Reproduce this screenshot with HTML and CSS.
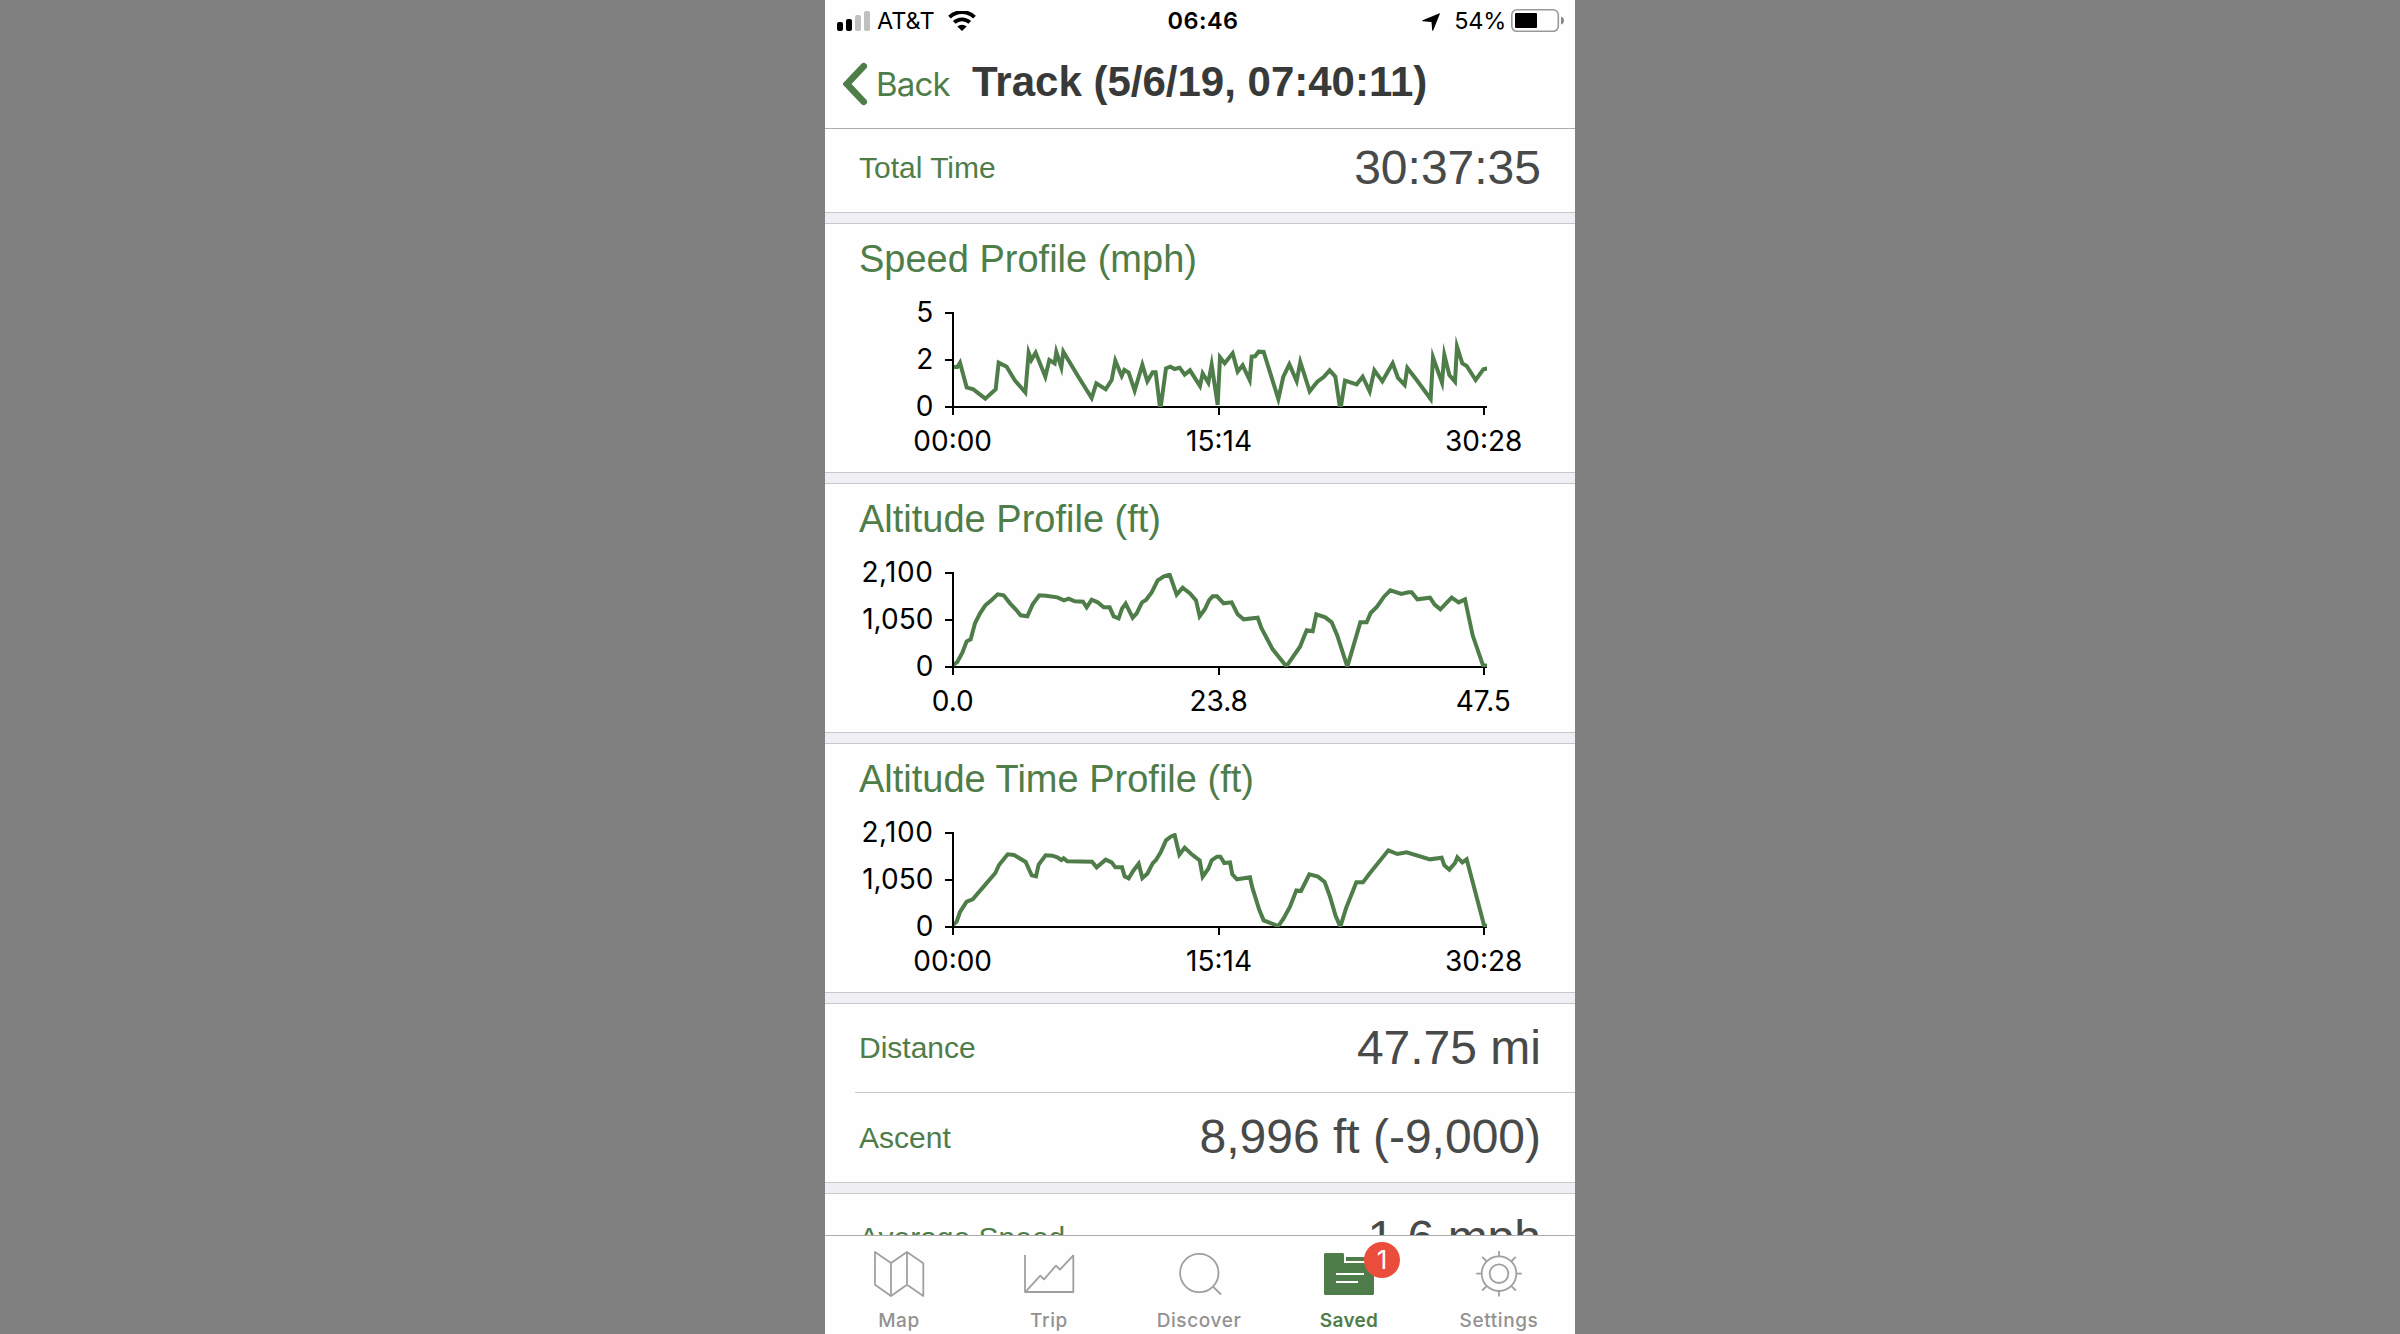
FILE: index.html
```html
<!DOCTYPE html>
<html lang="en">
<head>
    <meta charset="UTF-8">
    <meta name="viewport" content="width=device-width, initial-scale=1.0">
    <title>Track</title>
    <link rel="stylesheet" href="styles.css">
</head>
<body>
    <div class="phone">
        <header class="header">
            <div class="status-bar">
                <div class="status-left">
                    <svg class="signal" width="34" height="20" viewBox="0 0 34 20">
                        <rect x="0" y="11" width="6" height="9" rx="2"/>
                        <rect x="9" y="8" width="6" height="12" rx="2"/>
                        <rect class="dim" x="18" y="4" width="6" height="16" rx="2"/>
                        <rect class="dim" x="27" y="0" width="6" height="20" rx="2"/>
                    </svg>
                    <span class="carrier">AT&amp;T</span>
                    <svg class="wifi" width="28" height="20" viewBox="0 0 28 20">
                        <path d="M1.5 6.2a18 18 0 0 1 25 0M6.2 11.4a11.5 11.5 0 0 1 15.6 0" fill="none" stroke="#000" stroke-width="3.9"/>
                        <path d="M14 20l-4.7-4.4a7 7 0 0 1 9.4 0z"/>
                    </svg>
                </div>
                <span class="clock">06:46</span>
                <div class="status-right">
                    <svg class="location" width="18" height="18" viewBox="0 0 18 18">
                        <path d="M17.6 0.3Q18 0 17.9 0.7L11.2 17.4Q10.5 18.3 10.2 17.2L9.5 9L0.8 8.3Q-0.3 7.8 0.6 7.2z"/>
                    </svg>
                    <span class="percent">54%</span>
                    <svg class="battery" width="54" height="24" viewBox="0 0 54 24">
                        <rect x="0.8" y="0.8" width="46.5" height="21.5" rx="5" fill="none" stroke="#999" stroke-width="1.6"/>
                        <rect x="4" y="4" width="22" height="15" rx="1"/>
                        <path d="M50 7.5q3 1 3 4t-3 4z" fill="#888"/>
                    </svg>
                </div>
            </div>
            <div class="nav-bar">
                <svg class="chevron" width="26" height="44" viewBox="0 0 26 44">
                    <path d="M20.7 4.3L4 22L20.7 39.7"/>
                </svg>
                <span class="back">Back</span>
                <h1>Track (5/6/19, 07:40:11)</h1>
            </div>
        </header>

        <main class="content">
            <section class="card first">
                <div class="row"><span class="label">Total Time</span><span class="value">30:37:35</span></div>
            </section>

            <section class="card">
                <h2>Speed Profile (mph)</h2>
                <svg class="chart" viewBox="-45 210 2250 540">
                    <clipPath id="plot"><rect x="342" y="279" width="1599" height="282"/></clipPath>
                    <path class="axis" d="M315 279H339V585M315 420H339M315 561H1941M1137 561V585M1932 561V585"/>
                    <polyline class="line" clip-path="url(#plot)" points="340,441 352,441 360,428 380,502 400,508 436,536 467,508 476,428 500,440 525,482 556,517 566,398 574,420 587,398 616,470 628,420 644,430 649,396 664,442 670,395 715,470 755,534 769,490 797,508 815,480 826,422 845,468 853,450 866,458 884,512 907,434 922,484 938,457 947,457 961,570 978,445 991,440 1004,447 1019,443 1034,464 1050,451 1080,498 1088,460 1105,488 1115,434 1133,555 1140,412 1154,430 1178,400 1193,455 1208,436 1229,480 1235,410 1245,409 1256,395 1271,396 1315,537 1330,470 1348,433 1370,483 1381,426 1409,514 1432,485 1451,471 1469,451 1486,470 1501,570 1515,482 1550,493 1568,470 1589,514 1603,451 1627,484 1658,430 1674,474 1694,495 1702,444 1730,480 1772,537 1779,412 1806,488 1813,405 1828,465 1845,485 1851,380 1867,430 1880,438 1907,480 1930,448 1945,445"/>
                    <g class="y-labels">
                        <text x="280" y="306">5</text>
                        <text x="280" y="447">2</text>
                        <text x="280" y="588">0</text>
                    </g>
                    <g class="x-labels">
                        <text x="338" y="692">00:00</text>
                        <text x="1137" y="692">15:14</text>
                        <text x="1931" y="692">30:28</text>
                    </g>
                </svg>
            </section>

            <section class="card">
                <h2>Altitude Profile (ft)</h2>
                <svg class="chart" viewBox="-45 210 2250 540">
                    <path class="axis" d="M315 279H339V585M315 420H339M315 561H1941M1137 561V585M1932 561V585"/>
                    <polyline class="line" clip-path="url(#plot)" points="338,556 352,546 367,518 380,484 392,478 405,430 420,400 436,376 455,360 473,343 491,346 510,370 527,388 542,406 562,409 578,373 598,346 618,347 652,352 672,361 686,356 704,364 729,365 740,382 755,359 773,367 791,382 809,382 821,409 836,415 846,386 857,371 878,413 890,400 906,367 918,360 935,337 953,301 972,289 989,284 1010,344 1028,323 1050,340 1068,361 1079,409 1095,387 1107,361 1118,349 1131,349 1151,370 1175,367 1193,403 1211,418 1253,413 1264,444 1298,508 1339,559 1380,500 1400,451 1418,454 1429,403 1456,412 1475,427 1492,467 1522,560 1561,427 1580,427 1592,399 1611,380 1632,350 1651,331 1684,342 1705,337 1715,337 1732,358 1770,353 1784,374 1801,388 1835,353 1856,367 1875,358 1898,466 1929,556 1945,558"/>
                    <g class="y-labels">
                        <text class="wide" x="280" y="306">2,100</text>
                        <text x="280" y="447">1,050</text>
                        <text x="280" y="588">0</text>
                    </g>
                    <g class="x-labels">
                        <text x="338" y="692">0.0</text>
                        <text x="1136" y="692">23.8</text>
                        <text x="1930" y="692">47.5</text>
                    </g>
                </svg>
            </section>

            <section class="card">
                <h2>Altitude Time Profile (ft)</h2>
                <svg class="chart" viewBox="-45 210 2250 540">
                    <path class="axis" d="M315 279H339V585M315 420H339M315 561H1941M1137 561V585M1932 561V585"/>
                    <polyline class="line" clip-path="url(#plot)" points="338,556 350,545 360,516 380,485 398,478 436,434 466,399 477,375 503,343 522,345 557,366 575,406 588,409 596,374 617,346 637,347 652,352 664,360 671,355 682,364 756,365 770,382 797,359 815,367 826,382 846,382 854,409 866,415 880,392 896,371 907,414 922,401 938,370 948,360 962,337 978,301 992,290 1004,285 1018,344 1034,323 1054,342 1079,361 1088,410 1105,386 1115,361 1131,350 1141,350 1153,369 1170,367 1177,403 1191,418 1230,412 1237,443 1258,510 1271,541 1315,558 1330,537 1350,500 1369,451 1383,453 1408,403 1434,410 1454,426 1470,470 1487,528 1501,560 1518,505 1549,427 1569,427 1587,403 1645,331 1672,342 1700,337 1770,358 1805,353 1813,376 1828,389 1845,369 1852,352 1867,367 1880,358 1932,555 1945,558"/>
                    <g class="y-labels">
                        <text class="wide" x="280" y="306">2,100</text>
                        <text x="280" y="447">1,050</text>
                        <text x="280" y="588">0</text>
                    </g>
                    <g class="x-labels">
                        <text x="338" y="692">00:00</text>
                        <text x="1137" y="692">15:14</text>
                        <text x="1931" y="692">30:28</text>
                    </g>
                </svg>
            </section>

            <section class="card">
                <div class="row"><span class="label">Distance</span><span class="value">47.75 mi</span></div>
                <div class="row"><span class="label">Ascent</span><span class="value">8,996 ft (-9,000)</span></div>
            </section>

            <section class="card">
                <div class="row"><span class="label">Average Speed</span><span class="value">1.6 mph</span></div>
            </section>
        </main>

        <nav class="tab-bar">
            <div class="tab">
                <svg class="icon" viewBox="0 0 60 50">
                    <path d="M5 2L21 13L37 2L53.3 13.3V46L37 34.7L21 46L5 34.7ZM21 13V46M37 2V34.7"/>
                </svg>
                <span>Map</span>
            </div>
            <div class="tab">
                <svg class="icon" viewBox="0 0 60 50">
                    <path d="M5 5V42H53.3V5.3L40 19.7L36 15.7L24 29.3L20.3 25.7L5.7 41.7"/>
                </svg>
                <span>Trip</span>
            </div>
            <div class="tab">
                <svg class="icon" viewBox="0 0 60 50">
                    <circle cx="29.3" cy="23" r="19.2"/>
                    <path d="M43 36.7L51 44.5"/>
                </svg>
                <span>Discover</span>
            </div>
            <div class="tab active">
                <svg class="icon" viewBox="0 0 60 50">
                    <path class="solid" d="M5 3H23L24 4V13H54V44L53 45H5L4 44V4ZM26 7H54V11H26Z"/>
                    <path class="lines" d="M16 24H44M16 32H38"/>
                </svg>
                <span>Saved</span>
                <div class="badge">1</div>
            </div>
            <div class="tab">
                <svg class="icon" viewBox="0 0 60 50">
                    <circle cx="29" cy="23.7" r="17.3"/>
                    <circle cx="29" cy="23.7" r="9.3"/>
                    <path d="M29 6.4V0.9M29 41V46.6M11.7 23.7H6.2M46.3 23.7H51.8M16.8 11.5L12.2 6.9M41.2 11.5L45.8 6.9M16.8 35.9L12.2 40.5M41.2 35.9L45.8 40.5"/>
                </svg>
                <span>Settings</span>
            </div>
        </nav>
    </div>
</body>
</html>
```
FILE: styles.css
```css
body {
    margin: 0;
    background-color: #808080;
    font-family: "Liberation Sans", Arial, sans-serif;
}

.phone {
    display: flex;
    flex-direction: column;
    width: 750px;
    height: 1334px;
    margin: 0 auto;
    background-color: #efeff4;
    overflow: hidden;
}

.header {
    flex: none;
    box-sizing: border-box;
    height: 129px;
    background-color: #fefefe;
    border-bottom: 1px solid #acacac;
}

.status-bar {
    display: grid;
    grid-template-columns: 1fr auto 1fr;
    align-items: center;
    height: 40px;
    padding: 0 10px 0 12px;
    font-family: Inter, sans-serif;
    font-size: 23.5px;
    line-height: 41px;
    color: #000;
}

.status-left,
.status-right {
    display: flex;
    align-items: center;
}

.status-right {
    justify-content: flex-end;
}

.dim {
    fill: #c0c0c0;
}

.carrier {
    margin-left: 6px;
}

.wifi {
    margin-left: 13px;
}

.clock {
    margin-left: 4px;
    font-weight: 600;
    letter-spacing: 0.5px;
}

.percent {
    margin: 0 5px 0 14px;
    letter-spacing: -0.3px;
}

.location {
    margin-top: 2px;
}

.nav-bar {
    display: flex;
    align-items: center;
    height: 88px;
    padding-left: 18px;
}

.chevron {
    fill: none;
    stroke: #4f7d49;
    stroke-width: 6.7px;
    stroke-linecap: round;
}

.back {
    width: 96px;
    margin-left: 7px;
    font-family: Inter, sans-serif;
    font-size: 33px;
    letter-spacing: -0.8px;
    color: #4f7d49;
}

h1 {
    margin: 0 0 4px;
    font-size: 42px;
    line-height: 48px;
    color: #383a39;
}

.content {
    flex: 1;
    min-height: 0;
    overflow: hidden;
}

.card {
    margin-bottom: 10px;
    background-color: #fefefe;
    border-top: 1px solid #c8c7cc;
    border-bottom: 1px solid #c8c7cc;
}

.card.first {
    margin-top: -6px;
}

.row {
    display: flex;
    box-sizing: border-box;
    justify-content: space-between;
    align-items: center;
    height: 88px;
    padding: 0 34px;
}

.row + .row {
    position: relative;
    height: 90px;
    padding-top: 1px;
}

/* inset separator between rows */
.row + .row::before {
    content: "";
    position: absolute;
    top: 0;
    left: 30px;
    right: 0;
    height: 1px;
    background-color: #c8c7cc;
}

.label {
    font-size: 30px;
    color: #4f7d49;
}

.value {
    margin-bottom: 2px;
    font-size: 48px;
    color: #484a49;
}

h2 {
    margin: 0;
    padding: 4px 34px 0;
    font-size: 38px;
    font-weight: normal;
    line-height: 62px;
    color: #4f7d49;
}

.chart {
    display: block;
    width: 750px;
    height: 180px;
    margin-bottom: 2px;
}

.axis {
    fill: none;
    stroke: #000;
    stroke-width: 6;
}

.line {
    fill: none;
    stroke: #4f7d49;
    stroke-width: 12;
    stroke-miterlimit: 10;
}

.chart text {
    font-family: Inter, sans-serif;
    font-size: 84px;
    fill: #000;
}

.y-labels {
    text-anchor: end;
}

.y-labels .wide {
    letter-spacing: 1.5px;
}

.x-labels {
    text-anchor: middle;
}

.tab-bar {
    display: flex;
    flex: none;
    box-sizing: border-box;
    height: 99px;
    background-color: #fefefe;
    border-top: 1px solid #acacac;
}

.tab {
    position: relative;
    display: flex;
    flex: 1;
    flex-direction: column;
    align-items: center;
    padding-top: 14px;
    font-family: Inter, sans-serif;
    font-size: 19px;
    font-weight: 500;
    line-height: 42px;
    letter-spacing: 0.6px;
    color: #929292;
}

.tab span {
    margin-right: 2px;
}

.icon {
    flex: none;
    width: 60px;
    height: 50px;
    fill: none;
    stroke: #a0a0a0;
    stroke-width: 1.8;
    stroke-linejoin: round;
}

.active {
    font-weight: 600;
    letter-spacing: 0.3px;
    color: #4f7d49;
}

.solid {
    fill: #4f7d49;
    stroke: none;
}

.lines {
    stroke: #fff;
    stroke-width: 2;
}

.badge {
    position: absolute;
    top: 6px;
    left: 89px;
    width: 36px;
    height: 36px;
    border-radius: 50%;
    background-color: #eb4d3d;
    color: #fff;
    font-size: 26px;
    font-weight: 400;
    line-height: 36px;
    letter-spacing: 0;
    text-align: center;
}
```
